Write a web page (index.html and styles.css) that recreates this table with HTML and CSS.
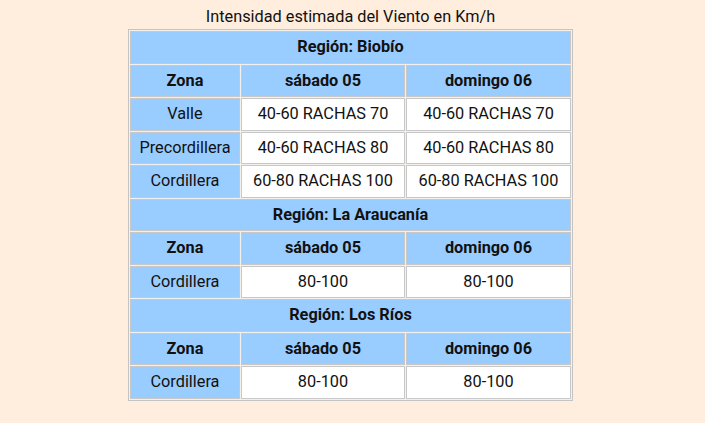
FILE: index.html
```html
<!DOCTYPE html>
<html lang="es">
<head>
<meta charset="utf-8">
<link rel="stylesheet" href="styles.css">
</head>
<body>
<div class="wrap">
  <div class="title">Intensidad estimada del Viento en Km/h</div>
  <table class="wind">
    <colgroup><col class="c1"><col class="c2"><col class="c3"></colgroup>
    <tr><th colspan="3">Región: Biobío</th></tr>
    <tr><th>Zona</th><th>sábado 05</th><th>domingo 06</th></tr>
    <tr><td class="zona">Valle</td><td>40-60 RACHAS 70</td><td>40-60 RACHAS 70</td></tr>
    <tr><td class="zona">Precordillera</td><td>40-60 RACHAS 80</td><td>40-60 RACHAS 80</td></tr>
    <tr><td class="zona">Cordillera</td><td>60-80 RACHAS 100</td><td>60-80 RACHAS 100</td></tr>
    <tr><th colspan="3">Región: La Araucanía</th></tr>
    <tr><th>Zona</th><th>sábado 05</th><th>domingo 06</th></tr>
    <tr><td class="zona">Cordillera</td><td>80-100</td><td>80-100</td></tr>
    <tr><th colspan="3">Región: Los Ríos</th></tr>
    <tr><th>Zona</th><th>sábado 05</th><th>domingo 06</th></tr>
    <tr><td class="zona">Cordillera</td><td>80-100</td><td>80-100</td></tr>
  </table>
</div>
</body>
</html>
```
FILE: styles.css
```css
html, body {
  margin: 0;
  background: #ffeedd;
}
body {
  font-family: Roboto, "Liberation Sans", sans-serif;
  color: #111;
  font-size: 16px;
}
.wrap {
  display: flex;
  flex-direction: column;
  align-items: center;
  padding: 5px 4px 0 0;
}
.title {
  line-height: 24px;
  height: 24px;
  font-size: 16.3px;
}
.wind {
  width: 445px;
  table-layout: fixed;
  border-collapse: separate;
  border-spacing: 1px;
  border: 1px solid #c4c4c4;
  background: #f4f0ec;
}
.c1 { width: 110px; }
.c2 { width: 164px; }
.c3 { width: 165px; }
.wind th, .wind td {
  border: 1px solid #c8c8c8;
  height: 30.5px;
  padding: 0;
  text-align: center;
  line-height: 20px;
  font-size: 16.3px;
}
.wind th {
  background: #99ccff;
  font-weight: 700;
}
.wind td {
  background: #ffffff;
}
.wind td.zona {
  background: #99ccff;
}
```
